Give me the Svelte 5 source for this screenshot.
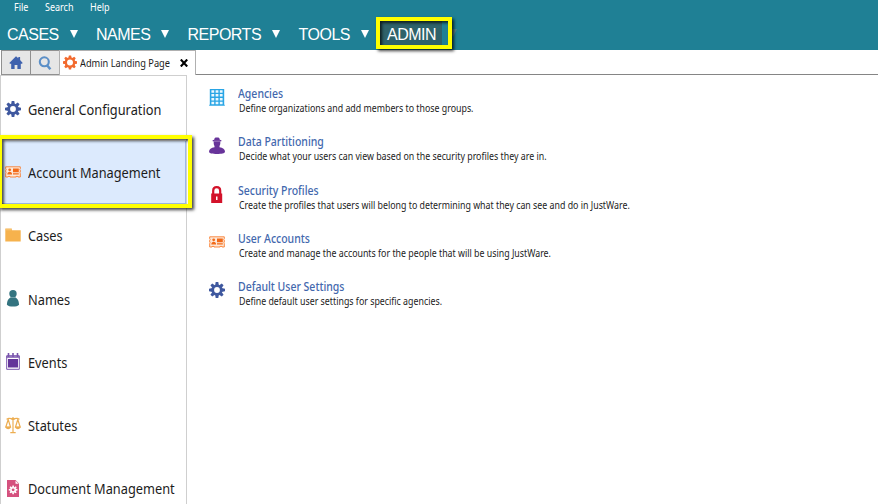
<script>
  const menus = [
    { label: 'File', w: 31 },
    { label: 'Search', w: 45 },
    { label: 'Help', w: 40 },
  ];
  const nav = [
    { label: 'CASES', w: 89 },
    { label: 'NAMES', w: 91.5 },
    { label: 'REPORTS', w: 111 },
    { label: 'TOOLS', w: 88.5 },
  ];
  const sections = [
    { label: 'General Configuration', icon: 'gear' },
    { label: 'Account Management', icon: 'card', selected: true },
    { label: 'Cases', icon: 'folder' },
    { label: 'Names', icon: 'person' },
    { label: 'Events', icon: 'calendar' },
    { label: 'Statutes', icon: 'scales' },
    { label: 'Document Management', icon: 'document' },
  ];
  const links = [
    { title: 'Agencies', icon: 'building', text: 'Define organizations and add members to those groups.' },
    { title: 'Data Partitioning', icon: 'agent', text: 'Decide what your users can view based on the security profiles they are in.' },
    { title: 'Security Profiles', icon: 'lock', text: 'Create the profiles that users will belong to determining what they can see and do in JustWare.' },
    { title: 'User Accounts', icon: 'card', text: 'Create and manage the accounts for the people that will be using JustWare.' },
    { title: 'Default User Settings', icon: 'gear', text: 'Define default user settings for specific agencies.' },
  ];
  const teeth = [0, 45, 90, 135, 180, 225, 270, 315];
</script>

{#snippet gear(color, ring, thickness)}
  <g fill={color} stroke="none">
    {#each teeth as a}
      <path d="M6.700 0h2.600l.6 3.500H6.100z" transform="rotate({a} 8 8)" />
    {/each}
  </g>
  <circle cx="8" cy="8" r={ring} fill="none" stroke={color} stroke-width={thickness} />
{/snippet}

{#snippet icon(name)}
  <svg class="icon" width="16" height="17" viewBox="0 0 16 17">
    {#if name === 'gear'}
      {@render gear('#3f589f', 4.2, 2.6)}
    {:else if name === 'card'}
      <path fill="#fde9da" d="M1 3h14v10H1z" />
      <path fill="none" stroke="#f97d2c" stroke-width=".9" d="M.7 2.800h14.600v2l-.5.6.5.7v2l-.5.7.5.7v3.500h-2.200v-.6h-2v.6H5v-.6H3v.6H.7V9.500l.5-.7-.5-.7v-2l.5-.7-.5-.6z" />
      <circle cx="4.700" cy="5.800" r="1.400" fill="#f26a18" />
      <path fill="#f26a18" d="M2.300 10.500c0-2 1-2.800 2.400-2.800s2.400.8 2.400 2.800zM8 4.500h5.800v3.700H8zM8 9.200h5.800v1.300H8z" />
    {:else if name === 'folder'}
      <path fill="#f6b24d" d="M.3 1.500h6.500v1.700h8.900v11.300H.3z" />
      <path fill="#f8cf8d" d="M1 2.500h5v.7H1z" />
    {:else if name === 'person'}
      <circle cx="8" cy="3.800" r="3.700" fill="#347480" />
      <path fill="#347480" d="M5.600 6.500h4.800v1.200c2.200.8 3.300 2.500 3.700 7-1 1.300-3.400 1.900-6.100 1.900s-5.100-.6-6.100-1.900c.4-4.500 1.500-6.200 3.700-7z" />
      <path stroke="#8db3b9" stroke-width=".7" d="M5.600 7.500h4.800" />
    {:else if name === 'calendar'}
      <path fill="none" stroke="#7954ad" d="M1.700 2.700h12.600v13.600H1.700z" />
      <path stroke="#7954ad" stroke-width="1.600" d="M3.500 0v4M8 0v4M12.500 0v4M1.500 4h13" />
      <path fill="#64349a" d="M3 6h10v8.500H3z" />
    {:else if name === 'scales'}
      <path fill="none" stroke="#edae52" stroke-width="1.200" d="M8 0v15.200M5.300 15.700h5.400M1.500 2.200C4 1 5.500 1 8 2.500c2.500-1.500 4-1.500 6.500-.3M3.200 2.500.8 10h4.700zM12.800 2.500 10.500 10h4.700z" />
      <path fill="#edae52" d="M.2 9.800h5.900C5.600 13 .8 13 .2 9.800zM9.900 9.800h5.900c-.6 3.200-5.300 3.200-5.900 0zM6.500 1h3v2h-3z" />
    {:else if name === 'document'}
      <path fill="#d5517e" d="M2 0h8.500l3.500 3.500V17H2z" />
      <path fill="#fff" d="M10.500.7v3.100h3.100z" />
      <g transform="translate(3.800 5.500) scale(.54)">{@render gear('#fff', 4, 2.7)}</g>
    {:else if name === 'building'}
      <path fill="#29a5e5" d="M.8 0h14.400v15.800h.6v1H.2v-1h.6z" />
      <path fill="#eaf8ff" d="M2.400 1.300h2.800v2.500H2.400zM6.600 1.300h2.800v2.500H6.600zM10.800 1.300h2.800v2.500h-2.800zM2.400 5.100h2.800v2.500H2.400zM6.600 5.100h2.800v2.500H6.600zM10.800 5.100h2.800v2.500h-2.800zM2.400 8.900h2.800v2.500H2.400zM6.600 8.900h2.800v2.500H6.600zM10.800 8.900h2.800v2.500h-2.800zM2.400 12.800h2.800v2.500H2.400zM6.600 12.800h2.800v2.500H6.600zM10.800 12.800h2.800v2.500h-2.800z" />
    {:else if name === 'agent'}
      <path fill="#68349a" d="M5.200 2.700C5.500.6 6.200.4 8 .4s2.500.2 2.800 2.300l1.600.5v1h-1.100v2c0 1.400-.5 2-.8 2.700v1.300c3.300.5 5.500 2 5.500 4.500 0 1.600-3.700 2.200-8 2.200s-8-.6-8-2.200c0-2.500 2.300-4 5.500-4.500V8.900c-.3-.7-.8-1.300-.8-2.700v-2H3.600v-1z" />
      <path stroke="#b79bce" stroke-width=".7" d="M5 4.200h6" />
    {:else if name === 'lock'}
      <path fill="none" stroke="#d3122a" stroke-width="2.200" d="M4.200 9V4.700C4.200 2.200 5.500 1.200 7.700 1.200s3.500 1 3.500 3.500V9" />
      <path fill="#d3122a" d="M2.200 7.500h11V17h-11z" />
      <path fill="#fff" d="M7 10.400h1.500v3.600H7z" />
    {/if}
  </svg>
{/snippet}

<div class="app">
  <header>
    <div class="menubar">
      {#each menus as m}<div style:width="{m.w}px"><span class="narrow">{m.label}</span></div>{/each}
    </div>
    <nav>
      {#each nav as n}
        <div class="nav-item" style:width="{n.w}px">
          <span>{n.label}</span><i class="arrow"></i>
        </div>
      {/each}
      <div class="nav-item admin">
        <span>ADMIN</span>
        <i class="arrow faded"></i>
        <div class="marker admin-marker"></div>
      </div>
    </nav>
  </header>

  <div class="tabs">
    <div class="tool">
      <svg width="14" height="14" viewBox="0 0 14 14"><path fill="#3f62ae" d="M7 .3l2.300 2V1h1.800v3l2.600 2.900-.7.800h-1.200V13H8.400V9H5.600v4H2.200V7.700H1l-.7-.8z" /></svg>
    </div>
    <div class="tool">
      <svg width="14" height="14" viewBox="0 0 14 14"><circle cx="6.300" cy="5.800" r="4.500" fill="none" stroke="#5b8fc7" stroke-width="2.100" /><path stroke="#5b8fc7" stroke-width="2.500" d="M8.800 9l3.600 4.200" /></svg>
    </div>
    <div class="tab">
      <svg width="14" height="15" viewBox="0 0 16 16">{@render gear('#f26a2e', 4.7, 2.6)}</svg>
      <div class="tab-label"><span class="narrow">Admin Landing Page</span></div>
      <svg class="close" width="8" height="8" viewBox="0 0 8 8"><path stroke="#000" stroke-width="2.100" d="M.8.500l6.400 7M7.200.500l-6.400 7" /></svg>
    </div>
    <div class="rest"></div>
  </div>

  <div class="body">
    <aside>
      {#each sections as s}
        <div class="section" class:selected={s.selected}>
          {@render icon(s.icon)}
          <span class="narrow">{s.label}</span>
          {#if s.selected}<div class="marker section-marker"></div>{/if}
        </div>
      {/each}
    </aside>
    <main>
      {#each links as l}
        <div class="link">
          {@render icon(l.icon)}
          <div class="copy">
            <h2 class="narrow">{l.title}</h2>
            <p class="narrow">{l.text}</p>
          </div>
        </div>
      {/each}
    </main>
  </div>
</div>

<style>
  .app {
    width: 878px;
    height: 504px;
    overflow: hidden;
    display: flex;
    flex-direction: column;
    background: #fff;
    font-family: "Noto Sans", "Open Sans", sans-serif;
    color: #1c1c1c;
  }
  svg { display: block; flex: none; }
  .narrow {
    display: inline-block;
    white-space: nowrap;
    transform: scaleX(0.9);
    transform-origin: 0 50%;
  }
  header {
    height: 50px;
    flex: none;
    background: #1f8095;
    color: #fff;
  }
  .menubar {
    display: flex;
    height: 17px;
    box-sizing: border-box;
    padding-left: 14px;
    font-size: 10px;
    line-height: 14px;
  }
  nav {
    display: flex;
    height: 33px;
    padding-left: 7px;
    font: 16px/34px "Liberation Sans", Arial, sans-serif;
    letter-spacing: -0.5px;
  }
  .nav-item {
    display: flex;
    align-items: center;
    justify-content: space-between;
    box-sizing: border-box;
    padding: 2px 18.500px 0 0;
    white-space: nowrap;
  }
  .arrow {
    width: 0;
    border: 4px solid transparent;
    border-top: 8px solid #fff;
    border-bottom: 0;
    margin-top: -2px;
  }
  .admin {
    position: relative;
    width: 70px;
    padding: 0;
  }
  .admin span {
    margin-left: -7px;
    padding: 0 6px 0 7px;
    height: 28px;
    line-height: 33px;
    background: #2f626a;
    border-bottom: 3px solid transparent;
    background-clip: padding-box;
  }
  .faded { border-top-color: #56858f; }
  .marker {
    position: absolute;
    box-sizing: border-box;
    border: 4px solid #ff0;
    box-shadow: 2px 2px 3px rgba(0, 0, 0, 0.75), inset 2px 2px 3px rgba(0, 0, 0, 0.7);
  }
  .admin-marker {
    left: -11px;
    top: 0;
    width: 76px;
    height: 32px;
  }
  .tabs {
    display: flex;
    flex: none;
    height: 25px;
    box-sizing: border-box;
    padding-left: 1px;
  }
  .tool {
    width: 29px;
    box-sizing: border-box;
    display: flex;
    align-items: center;
    justify-content: center;
    background: #e6e6e6;
    border: solid #909090;
    border-width: 1px 0 1px 1px;
    padding-right: 1px;
  }
  .tab {
    width: 137px;
    box-sizing: border-box;
    display: flex;
    align-items: center;
    padding-left: 3px;
    border: solid #b0b0b0;
    border-width: 1px 1px 0 1px;
    font-size: 10.500px;
  }
  .tab svg { margin-top: -1px; }
  .tab-label { width: 99px; margin: 0 0 0 3px; }
  .tab-label .narrow { transform: scaleX(0.88); }
  .tab .close { margin-top: 0; margin-left: 0.500px; }
  .rest { flex: 1; border-bottom: 1px solid #858585; }
  .body { display: flex; flex: 1; min-height: 0; }
  aside {
    width: 187px;
    box-sizing: border-box;
    flex: none;
    border: solid #cfcfcf;
    border-width: 1px 1px 0 1px;
    padding-top: 2px;
  }
  .section {
    position: relative;
    height: 63.200px;
    display: flex;
    align-items: center;
    padding-left: 4px;
    font-size: 14px;
  }
  .section .icon { margin: -1px 0 0 0.300px; }
  .section .narrow { margin-left: 6.700px; transform: scaleX(0.913); }
  .selected {
    background: #dceafd;
    box-shadow: inset -1px -1px #9db9e4;
  }
  .section-marker {
    left: -3px;
    top: -6px;
    width: 194px;
    height: 73px;
  }
  main { padding: 10px 0 0 22px; }
  .link { display: flex; height: 48.300px; }
  .link .icon { margin-top: 4px; }
  .copy { margin-left: 13px; }
  h2, p { margin: 0; }
  h2.narrow {
    display: block;
    font-size: 12px;
    line-height: 17px;
    font-weight: 500;
    color: #4267ad;
    transform: scaleX(0.874);
  }
  p.narrow {
    display: block;
    margin-left: 1px;
    font-size: 10px;
    line-height: 12px;
    transform: scaleX(0.882);
  }
</style>
